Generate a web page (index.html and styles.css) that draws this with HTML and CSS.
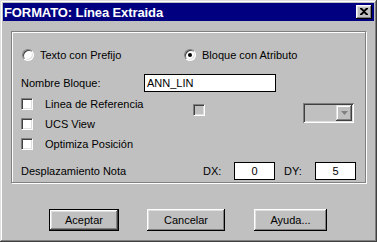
FILE: index.html
```html
<!DOCTYPE html>
<html>
<head>
<meta charset="utf-8">
<link rel="stylesheet" href="styles.css">
</head>
<body>
<div class="window">
  <div class="titlebar">
    <span class="title">FORMATO: Línea Extraida</span>
    <span class="close"><svg width="8" height="7" viewBox="0 0 8 7"><path d="M0 0h2l2 2 2-2h2v1L5 3.5 8 6v1H6L4 5 2 7H0V6l3-2.5L0 1z" fill="#000"/></svg></span>
  </div>
  <div class="group">
    <div class="row radios">
      <label class="opt opt1"><span class="radio"></span><span>Texto con Prefijo</span></label>
      <label class="opt opt2"><span class="radio on"></span><span>Bloque con Atributo</span></label>
    </div>
    <div class="row nombre">
      <span class="lbl">Nombre Bloque:</span>
      <span class="field wide">ANN_LIN</span>
    </div>
    <div class="checks">
      <div class="checkcol">
        <label class="opt"><span class="check"></span><span>Linea de Referencia</span></label>
        <label class="opt"><span class="check"></span><span>UCS View</span></label>
        <label class="opt"><span class="check"></span><span>Optimiza Posición</span></label>
      </div>
      <span class="check disabled mid"></span>
      <span class="combo"><span class="cbtn"><svg width="7" height="4" viewBox="0 0 7 4"><path d="M0 0h7L3.5 4z" fill="#808080"/></svg></span></span>
    </div>
    <div class="row despl">
      <span class="lbl">Desplazamiento Nota</span>
      <span class="dlbl dx">DX:</span>
      <span class="field small">0</span>
      <span class="dlbl dy">DY:</span>
      <span class="field small">5</span>
    </div>
  </div>
  <div class="buttons">
    <span class="btn default b1">Aceptar</span>
    <span class="btn b2">Cancelar</span>
    <span class="btn b3">Ayuda...</span>
  </div>
</div>
</body>
</html>
```
FILE: styles.css
```css
* { box-sizing: border-box; }
html, body { margin: 0; padding: 0; background: #c0c0c0; }
body { font-family: "Liberation Sans", Arial, sans-serif; font-size: 11px; color: #000; }
.window {
  width: 377px; height: 242px; background: #c0c0c0; padding: 3px;
  box-shadow: inset -1px -1px #404040, inset 1px 1px #dfdfdf, inset -2px -2px #808080, inset 2px 2px #fff;
  display: flex; flex-direction: column;
}
.titlebar {
  height: 18px; background: #000080; display: flex; align-items: center;
  justify-content: space-between; padding: 0 2px 0 1px;
}
.title { color: #fff; font-weight: bold; font-size: 13px; letter-spacing: -0.1px; }
.close {
  width: 16px; height: 14px; background: #c0c0c0; display: flex; align-items: center; justify-content: center;
  box-shadow: inset -1px -1px #000, inset 1px 1px #fff, inset -2px -2px #808080, inset 2px 2px #dfdfdf;
  padding-bottom: 1px;
}
.group {
  margin: 10px 0 0 8px; width: 355px; height: 152px;
  border: 1px solid #808080; box-shadow: inset 1px 1px #fff, 1px 1px #fff;
  display: flex; flex-direction: column; padding: 0 0 0 1px;
}
.row { display: flex; align-items: center; }
.opt { display: flex; align-items: center; }
.radios { margin-top: 16px; height: 14px; }
.opt1 { margin-left: 9px; width: 162px; }
.opt1 .radio, .opt2 .radio { margin-right: 6px; }
.radio {
  width: 12px; height: 12px; border-radius: 50%; background: #fff; position: relative;
  border: 1px solid; border-color: #808080 #fff #fff #808080;
  box-shadow: inset 1px 1px #404040, inset -1px -1px #dfdfdf;
}
.radio.on::after {
  content: ""; position: absolute; left: 3px; top: 3px; width: 4px; height: 4px; border-radius: 50%; background: #000;
}
.nombre { margin-top: 12px; height: 18px; }
.lbl { margin-left: 8px; }
.nombre .lbl { width: 123px; }
.field {
  height: 18px; background: #fff; border: 1px solid #000; display: flex; align-items: center; padding-left: 2px;
}
.wide { width: 132px; }
.checks { display: flex; margin-top: 6px; height: 53px; }
.checkcol { display: flex; flex-direction: column; gap: 8px; margin-left: 8px; width: 172px; }
.check {
  width: 12px; height: 12px; background: #fff; flex: none;
  border: 1px solid; border-color: #808080 #fff #fff #808080;
  box-shadow: inset 1px 1px #404040, inset -1px -1px #dfdfdf;
}
.checkcol .check { margin-right: 12px; }
.check.disabled { background: #c0c0c0; }
.mid { margin-top: 6px; }
.combo {
  margin: 5px 0 0 98px; width: 51px; height: 20px; display: flex; justify-content: flex-end; padding: 2px;
  box-shadow: inset 1px 1px #808080, inset -1px -1px #fff, inset 2px 2px #404040, inset -2px -2px #dfdfdf;
}
.cbtn {
  width: 16px; height: 16px; background: #c0c0c0; display: flex; align-items: center; justify-content: center;
  box-shadow: inset -1px -1px #404040, inset 1px 1px #dfdfdf, inset -2px -2px #808080, inset 2px 2px #fff;
}
.despl { margin-top: 11px; height: 18px; }
.despl .lbl { width: 182px; }
.dlbl { width: 31px; }
.dy { margin-left: 9px; }
.small { width: 41px; justify-content: center; padding-left: 0; }
.buttons { display: flex; margin-top: 26px; height: 22px; }
.btn {
  height: 22px; display: flex; align-items: center; justify-content: center;
  box-shadow: inset -1px -1px #000, inset 1px 1px #fff, inset -2px -2px #808080, inset 2px 2px #dfdfdf;
}
.btn.default {
  border: 1px solid #000;
  box-shadow: inset -1px -1px #404040, inset 1px 1px #fff, inset -2px -2px #808080, inset 2px 2px #dfdfdf;
}
.b1 { margin-left: 46px; width: 70px; }
.b2 { margin-left: 28px; width: 78px; }
.b3 { margin-left: 29px; width: 73px; }
```
